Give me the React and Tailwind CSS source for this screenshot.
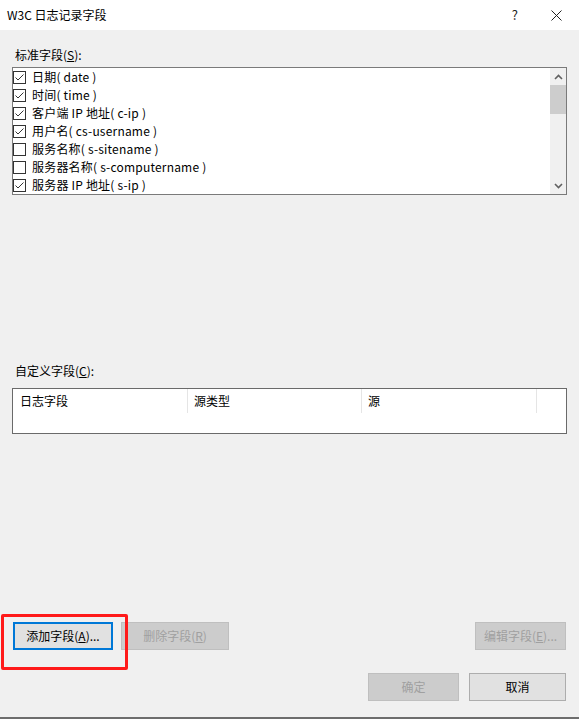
import React from 'react';

const font = { fontFamily: '"Noto Sans CJK SC", "Noto Sans", sans-serif' };

const fields = [
  { label: '日期( date )', checked: true },
  { label: '时间( time )', checked: true },
  { label: '客户端 IP 地址( c-ip )', checked: true },
  { label: '用户名( cs-username )', checked: true },
  { label: '服务名称( s-sitename )', checked: false },
  { label: '服务器名称( s-computername )', checked: false },
  { label: '服务器 IP 地址( s-ip )', checked: true },
];

const CheckBox = ({ checked }) => (
  <div className="w-[13px] h-[13px] border border-[#333333] bg-white flex items-center justify-center shrink-0">
    {checked && (
      <svg width="11" height="11" viewBox="0 0 11 11">
        <polyline points="1.5,5.5 4,8 9.5,2.5" fill="none" stroke="#333333" strokeWidth="1" />
      </svg>
    )}
  </div>
);

const Chevron = ({ down }) => (
  <svg width="9" height="6" viewBox="0 0 9 6">
    <polyline
      points={down ? '1,1 4.5,4.5 8,1' : '1,5 4.5,1.5 8,5'}
      fill="none"
      stroke="#606060"
      strokeWidth="1.6"
    />
  </svg>
);

const WinButton = ({ children, disabled, focused, className = '' }) => (
  <button
    className={
      'h-[28px] text-[12px] leading-none flex items-center justify-center ' +
      (disabled
        ? 'bg-[#cccccc] border border-[#bfbfbf] text-[#a0a0a0] '
        : focused
        ? 'bg-[#e1e1e1] border-2 border-[#0078d7] text-black '
        : 'bg-[#e1e1e1] border border-[#adadad] text-black ') +
      className
    }
  >
    {children}
  </button>
);

export default function App() {
  return (
    <div style={font} className="w-[579px] h-[719px] bg-[#f0f0f0] flex flex-col text-[12px] text-black overflow-hidden">
      {/* Title bar */}
      <div className="h-[30px] bg-white flex items-center shrink-0">
        <span className="ml-[7px] text-[12px] text-black">W3C 日志记录字段</span>
        <span className="ml-auto mr-[33px] text-[13px] text-[#222]">?</span>
        <svg width="11" height="11" viewBox="0 0 11 11" className="mr-[17px]">
          <path d="M0.5 0.5 L10.5 10.5 M10.5 0.5 L0.5 10.5" stroke="#222" strokeWidth="1" />
        </svg>
      </div>

      {/* Standard fields */}
      <div className="mt-[17px] ml-[15px] h-[16px] leading-[16px]">
        标准字段(<span className="underline">S</span>):
      </div>
      <div className="mt-[4px] ml-[12px] w-[555px] h-[128px] border border-[#7a7a7a] bg-white flex">
        <div className="flex-1 flex flex-col">
          {fields.map(f => (
            <div key={f.label} className="h-[18px] flex items-center gap-[6px]">
              <CheckBox checked={f.checked} />
              <span className="leading-[18px] whitespace-nowrap tracking-[0.2px]">{f.label}</span>
            </div>
          ))}
        </div>
        <div className="w-[16px] bg-[#f0f0f0] flex flex-col items-center">
          <div className="h-[17px] flex items-center justify-center">
            <Chevron />
          </div>
          <div className="w-[16px] h-[29px] bg-[#cdcdcd]" />
          <div className="flex-1" />
          <div className="h-[17px] flex items-center justify-center">
            <Chevron down />
          </div>
        </div>
      </div>

      {/* Custom fields */}
      <div className="mt-[168px] ml-[15px] h-[16px] leading-[16px]">
        自定义字段(<span className="underline">C</span>):
      </div>
      <div className="mt-[9px] ml-[12px] w-[555px] h-[46px] border border-[#6a6a6a] bg-white">
        <div className="flex h-[24px]">
          <div className="w-[175px] pl-[7px] flex items-center border-r border-[#e5e5e5]">日志字段</div>
          <div className="w-[174px] pl-[6px] flex items-center border-r border-[#e5e5e5]">源类型</div>
          <div className="w-[175px] pl-[6px] flex items-center border-r border-[#e5e5e5]">源</div>
          <div className="flex-1" />
        </div>
      </div>

      {/* Field buttons */}
      <div className="mt-[188px] ml-[13px] mr-[13px] flex">
        <div className="relative">
          <div className="absolute left-[-12px] top-[-8px] w-[127px] h-[56px] border-[3px] border-[#ff1a1a] rounded-[2px] pointer-events-none" />
          <WinButton focused className="w-[100px] h-[27px]">
            添加字段(<span className="underline">A</span>)...
          </WinButton>
        </div>
        <WinButton disabled className="ml-[8px] w-[108px] h-[27px]">
          删除字段(<span className="underline">R</span>)
        </WinButton>
        <WinButton disabled className="ml-auto w-[91px] h-[27px]">
          编辑字段(<span className="underline">E</span>)...
        </WinButton>
      </div>

      {/* Dialog buttons */}
      <div className="mt-[23px] mr-[13px] flex justify-end gap-[10px]">
        <WinButton disabled className="w-[91px]">确定</WinButton>
        <WinButton className="w-[97px]">取消</WinButton>
      </div>

      <div className="flex-1" />
      <div className="h-[2px] bg-[#6d6d6d]" />
    </div>
  );
}
